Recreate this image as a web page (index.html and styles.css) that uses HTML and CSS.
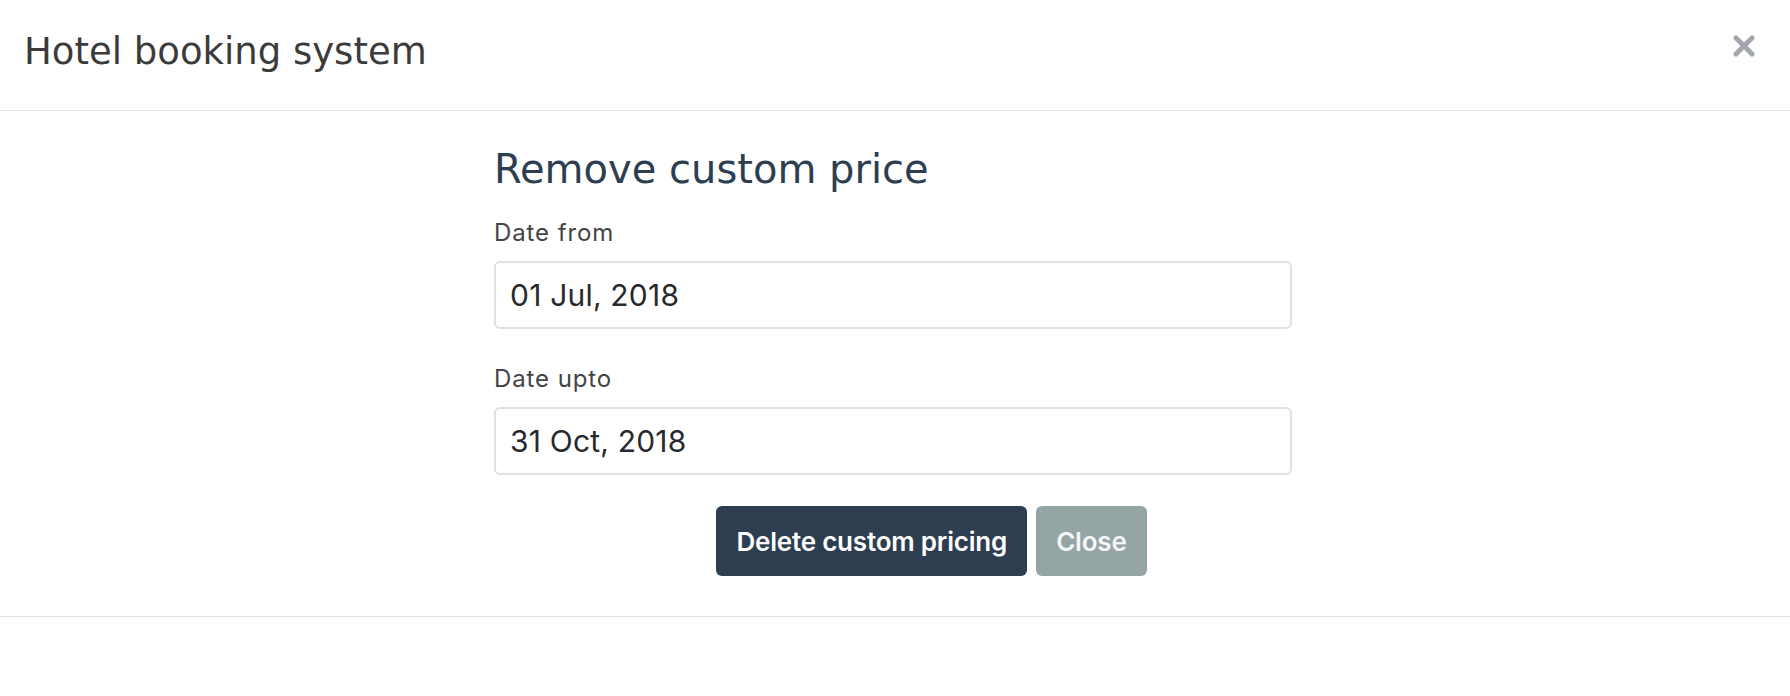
FILE: index.html
```html
<!DOCTYPE html>
<html lang="en">
<head>
<meta charset="utf-8">
<title>Hotel booking system</title>
<link rel="stylesheet" href="styles.css">
</head>
<body>
<div class="modal">
  <header class="modal-header">
    <h1 class="modal-title">Hotel booking system</h1>
    <button class="close-btn" aria-label="Close">
      <svg width="22" height="22" viewBox="0 0 22 22"><path d="M3 3 L19 19 M19 3 L3 19" stroke="#a2a6ad" stroke-width="5" stroke-linecap="round"/></svg>
    </button>
  </header>
  <main class="modal-body">
    <form class="form">
      <h2 class="form-title">Remove custom price</h2>
      <div class="field">
        <label class="field-label">Date from</label>
        <div class="field-input">01 Jul, 2018</div>
      </div>
      <div class="field">
        <label class="field-label">Date upto</label>
        <div class="field-input">31 Oct, 2018</div>
      </div>
      <div class="actions">
        <button type="button" class="btn btn-primary">Delete custom pricing</button>
        <button type="button" class="btn btn-secondary">Close</button>
      </div>
    </form>
  </main>
  <div class="modal-footer"></div>
</div>
</body>
</html>
```
FILE: styles.css
```css
* { box-sizing: border-box; }
html, body { margin: 0; padding: 0; background: #fff; }
body { font-family: Inter, "Liberation Sans", sans-serif; width: 1790px; height: 696px; overflow: hidden; }

.modal-header {
  height: 111px;
  border-bottom: 1px solid #e4e4e4;
  display: flex;
  align-items: flex-start;
  justify-content: space-between;
  padding: 0 24px 0 24px;
}
.modal-title {
  margin: 0;
  padding-top: 27px;
  font-family: "DejaVu Sans", sans-serif;
  font-weight: 400;
  font-size: 37px;
  line-height: 50px;
  color: #3b3b3b;
}
.close-btn {
  margin-top: 35px;
  margin-right: 11px;
  padding: 0;
  border: 0;
  background: none;
  width: 22px;
  height: 22px;
  display: flex;
}

.modal-body {
  height: 506px;
  border-bottom: 1px solid #e2e2e2;
  padding-right: 4px;
}
.form {
  width: 798px;
  margin: 0 auto;
  padding-top: 33px;
}
.form-title {
  margin: 0 0 23px;
  font-family: "DejaVu Sans", sans-serif;
  font-weight: 400;
  font-size: 40px;
  line-height: 50px;
  color: #2c3e50;
}
.field + .field { margin-top: 34px; }
.field-label {
  display: block;
  font-size: 24px;
  line-height: 32px;
  letter-spacing: 0.9px;
  color: #444;
  margin-bottom: 12px;
}
.field-input {
  height: 68px;
  border: 2px solid #e1e1e1;
  border-radius: 6px;
  padding: 0 14px;
  display: flex;
  align-items: center;
  font-size: 30px;
  letter-spacing: 0.2px;
  color: #262a2e;
}
.actions {
  display: flex;
  justify-content: center;
  gap: 9px;
  margin-top: 31px;
  margin-left: 77px;
}
.btn {
  height: 70px;
  border: 0;
  border-radius: 6px;
  padding: 0 20px;
  font-family: Inter, sans-serif;
  font-size: 26px;
  font-weight: 600;
  letter-spacing: -0.2px;
  color: #fff;
}
.btn-primary { background: #2c3e50; }
.btn-secondary { background: #95a5a6; color: #f4f6f6; }
```
